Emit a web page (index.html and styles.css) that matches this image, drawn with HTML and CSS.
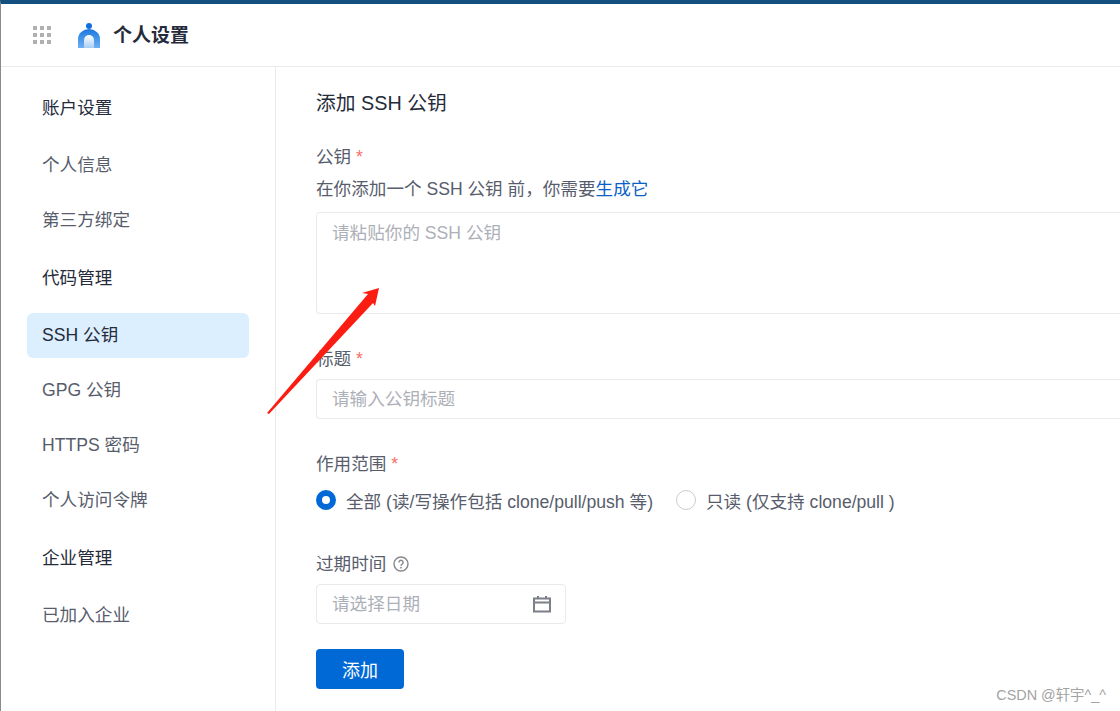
FILE: index.html
```html
<!DOCTYPE html>
<html lang="zh-CN">

<head>
    <meta charset="UTF-8">
    <title>个人设置</title>
    <link rel="stylesheet" href="styles.css">
</head>

<body>
    <header class="topbar">
        <div class="apps">
            <i></i><i></i><i></i><i></i><i></i><i></i><i></i><i></i><i></i>
        </div>
        <svg class="logo" width="22" height="25" viewBox="0 0 22 25">
            <defs>
                <linearGradient id="inner" x1="0" y1="0" x2="0" y2="1">
                    <stop offset="0" stop-color="#ffffff" />
                    <stop offset="1" stop-color="#a9cdf5" />
                </linearGradient>
                <linearGradient id="arch" x1="0" y1="0" x2="0" y2="1">
                    <stop offset="0" stop-color="#1a78e0" />
                    <stop offset="1" stop-color="#6fb0f2" />
                </linearGradient>
            </defs>
            <circle cx="11" cy="3" r="3" fill="#0f6fde" />
            <path d="M0 25V16a11 10 0 0 1 22 0v9z" fill="url(#arch)" />
            <path d="M6 25V17a5 5 0 0 1 10 0v8z" fill="url(#inner)" />
        </svg>
        <span class="app-name">个人设置</span>
    </header>

    <div class="layout">
        <nav class="sidebar">
            <a class="nav-head">账户设置</a>
            <a class="nav-item">个人信息</a>
            <a class="nav-item">第三方绑定</a>
            <a class="nav-head">代码管理</a>
            <a class="nav-item active">SSH 公钥</a>
            <a class="nav-item">GPG 公钥</a>
            <a class="nav-item">HTTPS 密码</a>
            <a class="nav-item">个人访问令牌</a>
            <a class="nav-head">企业管理</a>
            <a class="nav-item">已加入企业</a>
        </nav>

        <main class="content">
            <h2 class="title">添加 SSH 公钥</h2>
            <form class="form">
                <div class="field key-field">
                    <label class="label">公钥 <em>*</em></label>
                    <p class="help">在你添加一个 SSH 公钥 前，你需要<a href="#">生成它</a></p>
                    <textarea class="control area" placeholder="请粘贴你的 SSH 公钥"></textarea>
                </div>
                <div class="field title-field">
                    <label class="label">标题 <em>*</em></label>
                    <input class="control input" placeholder="请输入公钥标题">
                </div>
                <div class="field scope-field">
                    <label class="label">作用范围 <em>*</em></label>
                    <div class="radios">
                        <span class="radio checked"></span>
                        <span class="radio-text">全部 (读/写操作包括 clone/pull/push 等)</span>
                        <span class="radio"></span>
                        <span class="radio-text">只读 (仅支持 clone/pull )</span>
                    </div>
                </div>
                <div class="field date-field">
                    <label class="label">过期时间
                        <svg class="help-icon" width="16" height="16" viewBox="0 0 16 16">
                            <circle cx="8" cy="8" r="7" fill="none" stroke="#85878c" stroke-width="1.4" />
                            <path d="M5.9 6.4a2.1 2.1 0 1 1 3.2 1.8c-.7.4-1.1.8-1.1 1.5" fill="none" stroke="#85878c" stroke-width="1.4" />
                            <circle cx="8" cy="11.7" r=".9" fill="#85878c" />
                        </svg>
                    </label>
                    <div class="date">
                        <input class="date-input" placeholder="请选择日期">
                        <svg width="20" height="18" viewBox="0 0 20 18">
                            <path d="M2 3.5h16v13H2zM2 7.5h16M6 1v3M14 1v3" fill="none" stroke="#7b7f88" stroke-width="2" />
                        </svg>
                    </div>
                </div>
                <button class="submit" type="button">添加</button>
            </form>
        </main>
    </div>

    <!-- annotation drawn on top of the screenshot -->
    <svg class="arrow" width="1120" height="711" viewBox="0 0 1120 711">
        <path d="M267 413L368 294L362 293L379 288L375 306L373 303L269 414z" fill="#fb1d12" />
    </svg>
    <div class="watermark">CSDN @轩宇^_^</div>
</body>

</html>
```

FILE: styles.css
```css
* {
    box-sizing: border-box;
}

body {
    margin: 0;
    height: 711px;
    overflow: hidden;
    font-family: "Liberation Sans", "Noto Sans CJK SC", sans-serif;
    font-size: 17.6px;
    color: #575d6c;
    background-color: white;
    border-top: 4px solid #14507f;
    border-left: 1px solid #8a8a8a;
}

.topbar {
    display: flex;
    align-items: center;
    height: 63px;
    padding-left: 32px;
    border-bottom: 1px solid #e8eaed;
}

.apps {
    display: grid;
    grid-template-columns: repeat(3, 4px);
    gap: 3px;
    margin-right: 27px;
}

.apps i {
    width: 4px;
    height: 4px;
    background-color: #b0b0b0;
}

.logo {
    margin-right: 13px;
}

.app-name {
    padding-bottom: 3px;
    font-size: 19px;
    font-weight: 700;
    color: #252b3a;
}

.layout {
    display: flex;
    height: 644px;
}

.sidebar {
    display: flex;
    flex-direction: column;
    flex: none;
    width: 275px;
    padding: 18px 26px 0;
    border-right: 1px solid #e8eaed;
}

.nav-head,
.nav-item {
    display: block;
    height: 45px;
    line-height: 47px;
    padding-left: 15px;
    border-radius: 6px;
}

.nav-head {
    color: #252b3a;
    margin-bottom: 12px;
}

.nav-item {
    margin-bottom: 10px;
}

.nav-item + .nav-head {
    margin-top: 3px;
}

.nav-item.active {
    margin-top: 1px;
    margin-bottom: 9px;
    line-height: 45px;
    color: #252b3a;
    background-color: #dcefff;
}

.content {
    flex: 1;
    min-width: 0;
    padding: 0 0 0 40px;
}

.title {
    margin: 0;
    padding-top: 23px;
    font-size: 19.8px;
    line-height: 26px;
    font-weight: 400;
    color: #252b3a;
}

.label {
    display: block;
    line-height: 24px;
}

.label em {
    color: #f66f6a;
    font-style: normal;
}

.help {
    margin: 0 0 11px;
    line-height: 24px;
}

.help a {
    color: #0b5fc9;
    text-decoration: none;
}

/* the inputs run on past the right edge of the window */
.control {
    display: block;
    width: 100%;
    padding: 9px 15px;
    border: 1px solid #e8eaed;
    border-right: none;
    border-radius: 4px 0 0 4px;
    font: inherit;
    outline: none;
    resize: none;
}

::placeholder {
    color: #adb0b8;
    opacity: 1;
}

.key-field {
    margin-top: 29px;
}

.key-field .label {
    margin-bottom: 8px;
}

.area {
    height: 102px;
    line-height: 22px;
}

.title-field {
    margin-top: 32px;
}

.title-field .label {
    line-height: 26px;
    margin-bottom: 7px;
}

.input {
    height: 40px;
}

.scope-field {
    margin-top: 33px;
}

.radios {
    display: flex;
    align-items: center;
    height: 24px;
    margin-top: 12px;
}

.radio {
    width: 20px;
    height: 20px;
    margin-right: 10px;
    border: 1px solid #c9ccd2;
    border-radius: 50%;
}

.radio.checked {
    border: 6px solid #0069d6;
}

.radio-text {
    margin-right: 23px;
}

.date-field {
    margin-top: 40px;
}

.help-icon {
    vertical-align: -2px;
    margin-left: 2px;
}

.date-field .label {
    margin-bottom: 8px;
}

.date {
    display: flex;
    align-items: center;
    width: 250px;
    height: 40px;
    padding: 0 13px 0 15px;
    border: 1px solid #e8eaed;
    border-radius: 4px;
}

.date-input {
    flex: 1;
    min-width: 0;
    border: none;
    padding: 0;
    outline: none;
    font: inherit;
}

.submit {
    display: block;
    width: 88px;
    height: 40px;
    margin-top: 25px;
    border: none;
    border-radius: 4px;
    background-color: #0069d6;
    color: white;
    font: inherit;
    font-size: 18px;
}

.arrow {
    position: absolute;
    left: 0;
    top: 0;
    pointer-events: none;
}

.watermark {
    position: absolute;
    right: 14px;
    top: 685px;
    font-size: 14.4px;
    line-height: 20px;
    color: #a3a3a3;
}
```
